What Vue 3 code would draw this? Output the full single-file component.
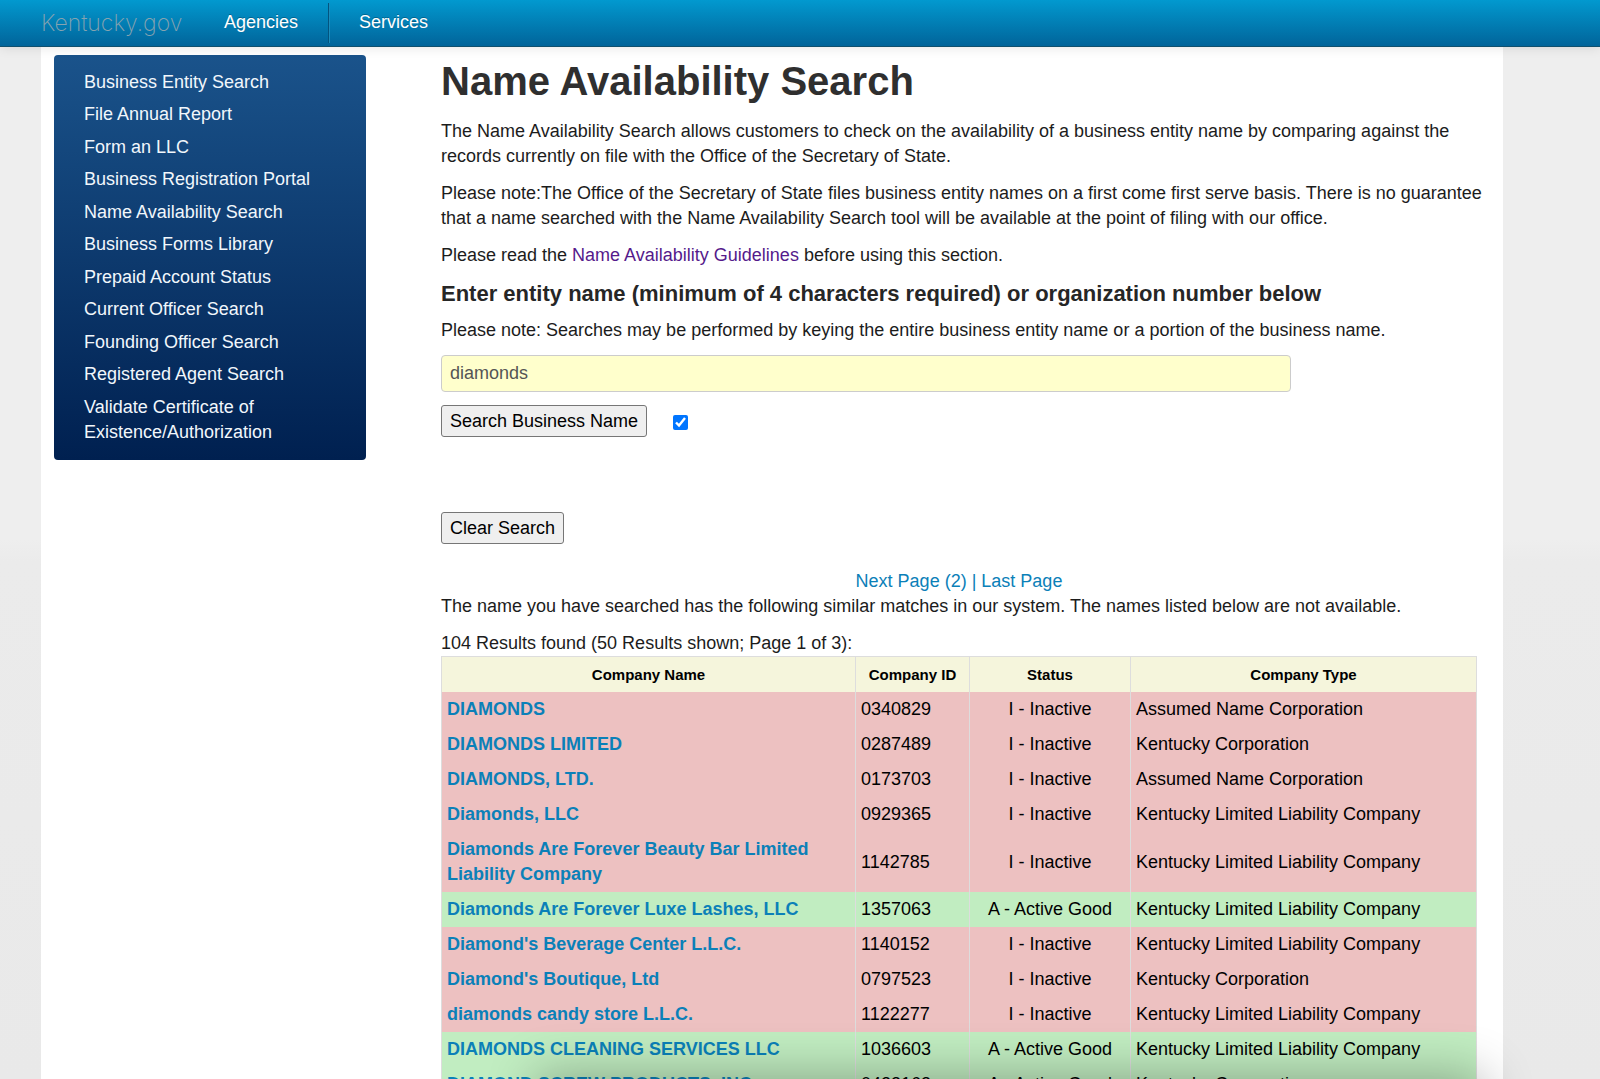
<script setup>
import { ref } from 'vue'

const menu = [
  'Business Entity Search',
  'File Annual Report',
  'Form an LLC',
  'Business Registration Portal',
  'Name Availability Search',
  'Business Forms Library',
  'Prepaid Account Status',
  'Current Officer Search',
  'Founding Officer Search',
  'Registered Agent Search',
  'Validate Certificate of Existence/Authorization',
]

const LLC = 'Kentucky Limited Liability Company'
const CORP = 'Kentucky Corporation'
const ASSUMED = 'Assumed Name Corporation'

const companies = [
  { name: 'DIAMONDS', id: '0340829', active: false, type: ASSUMED },
  { name: 'DIAMONDS LIMITED', id: '0287489', active: false, type: CORP },
  { name: 'DIAMONDS, LTD.', id: '0173703', active: false, type: ASSUMED },
  { name: 'Diamonds, LLC', id: '0929365', active: false, type: LLC },
  { name: 'Diamonds Are Forever Beauty Bar Limited Liability Company', id: '1142785', active: false, type: LLC },
  { name: 'Diamonds Are Forever Luxe Lashes, LLC', id: '1357063', active: true, type: LLC },
  { name: "Diamond's Beverage Center L.L.C.", id: '1140152', active: false, type: LLC },
  { name: "Diamond's Boutique, Ltd", id: '0797523', active: false, type: CORP },
  { name: 'diamonds candy store L.L.C.', id: '1122277', active: false, type: LLC },
  { name: 'DIAMONDS CLEANING SERVICES LLC', id: '1036603', active: true, type: LLC },
  { name: 'DIAMOND SCREW PRODUCTS, INC.', id: '0423163', active: true, type: CORP },
]

const query = ref('diamonds')
const activeOnly = ref(true)
</script>

<template>
  <div class="page">
    <header class="navbar">
      <a class="brand" href="#">Kentucky.gov</a>
      <nav class="nav">
        <a href="#">Agencies</a>
        <a href="#">Services</a>
      </nav>
    </header>

    <div class="container">
      <aside class="sidebar">
        <ul>
          <li v-for="item in menu" :key="item"><a href="#">{{ item }}</a></li>
        </ul>
      </aside>

      <main class="content">
        <h1>Name Availability Search</h1>
        <div class="intro">
          <p>
            The Name Availability Search allows customers to check on the availability of a business entity name by
            comparing against the records currently on file with the Office of the Secretary of State.
          </p>
          <p>
            Please note:The Office of the Secretary of State files business entity names on a first come first serve
            basis. There is no guarantee that a name searched with the Name Availability Search tool will be available
            at the point of filing with our office.
          </p>
          <p>Please read the <a class="visited" href="#">Name Availability Guidelines</a> before using this section.</p>
        </div>

        <h3><label for="entity">Enter entity name (minimum of 4 characters required) or organization number below</label></h3>
        <p>
          Please note: Searches may be performed by keying the entire business entity name or a portion of the business
          name.
        </p>

        <form @submit.prevent>
          <input id="entity" v-model="query" class="entity" type="text" />
          <div class="actions">
            <button type="submit">Search Business Name</button>
            <input v-model="activeOnly" type="checkbox" aria-label="Active" />
          </div>
          <button type="button" @click="query = ''">Clear Search</button>
        </form>

        <div class="pager"><a href="#">Next Page (2)</a><a href="#"> | Last Page</a></div>
        <p>The name you have searched has the following similar matches in our system. The names listed below are not available.</p>
        <div>104 Results found (50 Results shown; Page 1 of 3):</div>

        <table>
          <colgroup>
            <col class="col-name" />
            <col class="col-id" />
            <col class="col-status" />
            <col />
          </colgroup>
          <thead>
            <tr>
              <th scope="col">Company Name</th>
              <th scope="col">Company ID</th>
              <th scope="col">Status</th>
              <th scope="col">Company Type</th>
            </tr>
          </thead>
          <tbody>
            <tr v-for="c in companies" :key="c.id" :class="c.active ? 'active' : 'inactive'">
              <td class="name"><a href="#">{{ c.name }}</a></td>
              <td>{{ c.id }}</td>
              <td class="status">{{ c.active ? 'A - Active Good' : 'I - Inactive' }}</td>
              <td>{{ c.type }}</td>
            </tr>
          </tbody>
        </table>
      </main>
    </div>
    <div class="bottom-shade"></div>
  </div>
</template>

<style>
html,
body {
  margin: 0;
  height: 100%;
  overflow: hidden;
}
#app {
  height: 100%;
}
</style>

<style scoped>
.page {
  height: 100%;
  overflow: hidden;
  display: flex;
  flex-direction: column;
  background: linear-gradient(#eeeeee 0, #eeeeee 50%, #ebebeb 52%, #e9e9e9 100%);
  font-family: 'Liberation Sans', Arial, sans-serif;
  font-size: 18px;
  line-height: 25px;
  color: #1c1c1c;
}
a {
  color: #0b80b8;
  text-decoration: none;
}
.navbar {
  position: relative;
  flex: none;
  display: flex;
  align-items: stretch;
  height: 46px;
  padding-left: 41px;
  background: linear-gradient(#0299cf, #01649a);
  border-bottom: 1px solid #10506e;
  box-shadow: 0 1px 11px rgba(0, 0, 0, 0.1);
}
.brand {
  width: 153px;
  font-family: Inter, sans-serif;
  font-size: 23px;
  font-weight: 200;
  line-height: 46px;
  color: #86a3b0;
}
.nav {
  display: flex;
}
.nav a {
  margin: 3px 0;
  padding: 7px 30px;
  color: #fff;
  text-shadow: 0 -1px 0 rgba(0, 0, 0, 0.25);
}
.nav a + a {
  border-left: 1px solid #02547f;
  box-shadow: inset 1px 0 #1a8dbd;
}
.container {
  flex: 1;
  display: flex;
  align-items: flex-start;
  gap: 75px;
  margin: 0 97px 0 41px;
  padding: 8px 26px 0 13px;
  background: #fff;
}
.sidebar {
  flex: none;
  width: 312px;
  box-sizing: border-box;
  padding: 15px 50px 8px 30px;
  border-radius: 4px;
  background: linear-gradient(#1a538b, #002050);
}
.sidebar ul {
  margin: 0;
  padding: 0;
  list-style: none;
}
.sidebar li {
  padding-bottom: 7px;
}
.sidebar li:nth-child(even) {
  padding-bottom: 8px;
}
.sidebar a {
  color: #f1f7fc;
}
.content {
  flex: 1;
  min-width: 0;
}
.intro {
  margin-right: -13px;
}
h1 {
  margin: 0 0 12px;
  font-size: 40px;
  line-height: 52px;
  color: #2f2f2f;
}
h3 {
  margin: 0 0 11px;
  font-size: 22px;
  line-height: 27px;
  color: #262626;
}
p {
  margin: 0 0 12px;
}
.visited {
  color: #551a8b;
}
.entity {
  display: block;
  width: 82%;
  height: 37px;
  box-sizing: border-box;
  padding: 4px 8px;
  border: 1px solid #ccc;
  border-radius: 4px;
  background: #ffffcc;
  font: inherit;
  color: #555;
}
.actions {
  display: flex;
  align-items: center;
  gap: 26px;
  margin: 13px 0 75px;
}
button {
  height: 32px;
  padding: 0 8px;
  border: 1px solid #767676;
  border-radius: 3px;
  background: #efefef;
  font: inherit;
  color: #000;
}
input[type='checkbox'] {
  width: 15px;
  height: 15px;
  margin: 3px 0 0;
  accent-color: #0075ff;
}
.pager {
  margin-top: 25px;
  text-align: center;
  white-space: pre-wrap;
}
table {
  width: 100%;
  table-layout: fixed;
  border-collapse: collapse;
  border: 1px solid #ddd;
  color: #000;
}
.col-name {
  width: 40%;
}
.col-id {
  width: 114px;
}
.col-status {
  width: 161px;
}
th,
td {
  padding: 5px;
  border-left: 1px solid #ddd;
}
th {
  background: #f5f5dc;
  font-size: 15px;
}
td {
  text-align: left;
}
.name {
  font-weight: bold;
}
.status {
  text-align: center;
}
.inactive {
  background: #edc1c1;
}
.active {
  background: #c1edc1;
}
.bottom-shade {
  position: absolute;
  top: 100%;
  left: 540px;
  right: 120px;
  height: 60px;
  box-shadow: 0 0 50px 4px rgba(0, 0, 0, 0.3);
}
</style>
